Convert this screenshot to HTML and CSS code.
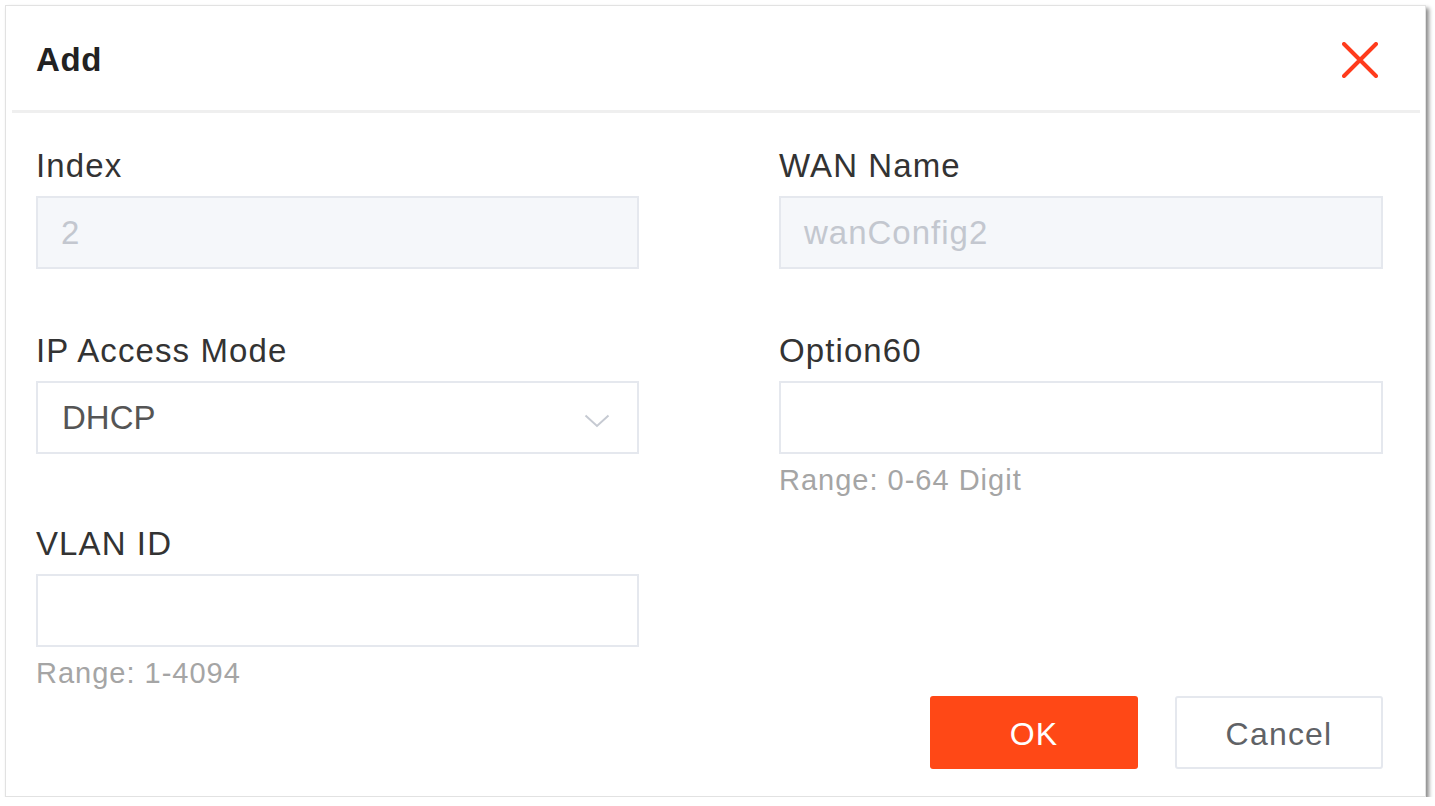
FILE: index.html
```html
<!DOCTYPE html>
<html lang="en">
<head>
<meta charset="utf-8">
<title>Add</title>
<link rel="stylesheet" href="styles.css">
</head>
<body>
<div class="dialog">
  <div class="dialog-header">
    <h1 class="dialog-title">Add</h1>
    <button class="close-btn" type="button" aria-label="Close">
      <svg width="36" height="36" viewBox="0 0 36 36"><path d="M2 2 L34 34 M34 2 L2 34" stroke="#ff3b1c" stroke-width="4" stroke-linecap="round" fill="none"/></svg>
    </button>
  </div>
  <div class="form-grid">
    <div class="field">
      <div class="field-label">Index</div>
      <div class="input is-disabled">2</div>
    </div>
    <div class="field">
      <div class="field-label">WAN Name</div>
      <div class="input is-disabled">wanConfig2</div>
    </div>
    <div class="field">
      <div class="field-label">IP Access Mode</div>
      <div class="input select">
        <span class="select-value">DHCP</span>
        <svg class="chevron" width="26" height="14" viewBox="0 0 26 14"><path d="M1.5 1.5 L13 12 L24.5 1.5" stroke="#c6cad2" stroke-width="2" fill="none"/></svg>
      </div>
    </div>
    <div class="field field-hinted">
      <div class="field-label">Option60</div>
      <div class="input"></div>
      <div class="hint">Range: 0-64 Digit</div>
    </div>
    <div class="field field-hinted">
      <div class="field-label">VLAN ID</div>
      <div class="input"></div>
      <div class="hint">Range: 1-4094</div>
    </div>
    <div class="actions">
      <button class="btn btn-primary" type="button">OK</button>
      <button class="btn btn-default" type="button">Cancel</button>
    </div>
  </div>
</div>
</body>
</html>
```

FILE: styles.css
```css
html, body {
  margin: 0;
  padding: 0;
  background: #ffffff;
}

body {
  font-family: "Liberation Sans", Arial, sans-serif;
  color: #333333;
}

.dialog {
  box-sizing: border-box;
  margin: 5px 0 0 5px;
  width: 1421px;
  height: 792px;
  background: #ffffff;
  border: 1px solid #e2e2e2;
  box-shadow: 3px 3px 4px rgba(0, 0, 0, 0.45);
  display: flex;
  flex-direction: column;
}

.dialog-header {
  margin: 0 5px 0 6px;
  border-bottom: 3px solid #efefef;
  display: flex;
  align-items: center;
  justify-content: space-between;
  padding: 3px 42px 0 24px;
  box-sizing: content-box;
  height: 101px;
}

.dialog-title {
  margin: 0;
  font-size: 33px;
  line-height: 40px;
  font-weight: bold;
  color: #222222;
  letter-spacing: 0.6px;
}

.close-btn {
  border: 0;
  padding: 0;
  margin: 0;
  background: transparent;
  width: 36px;
  height: 36px;
  display: block;
}

.close-btn svg {
  display: block;
}

.form-grid {
  display: grid;
  grid-template-columns: 603px 604px;
  column-gap: 140px;
  padding: 33px 42px 0 30px;
}

.field {
  display: flex;
  flex-direction: column;
  padding-bottom: 62px;
}

.field-hinted {
  padding-bottom: 28px;
}

.field-label {
  font-size: 33px;
  line-height: 40px;
  letter-spacing: 1.1px;
  color: #333333;
  margin-bottom: 10px;
}

.input {
  box-sizing: border-box;
  height: 73px;
  border: 2px solid #e5e8ee;
  background: #ffffff;
  padding: 0 24px 0 23px;
  font-size: 33px;
  line-height: 69px;
  letter-spacing: 1px;
  color: #555555;
}

.input.is-disabled {
  background: #f5f7fa;
  color: #c3c7cf;
}

.select {
  display: flex;
  align-items: center;
  justify-content: space-between;
  padding-right: 27px;
  padding-left: 24px;
}

.select-value {
  color: #555555;
  letter-spacing: 0;
}

.chevron {
  display: block;
  margin-top: 6px;
}

.hint {
  margin-top: 10px;
  font-size: 29px;
  line-height: 32px;
  letter-spacing: 1px;
  color: #a5a5a5;
}

.actions {
  display: flex;
  justify-content: flex-end;
  align-items: flex-start;
  gap: 37px;
  padding-top: 172px;
}

.btn {
  box-sizing: border-box;
  width: 208px;
  height: 73px;
  border-radius: 3px;
  font-family: "Liberation Sans", Arial, sans-serif;
  font-size: 32px;
  letter-spacing: 1.2px;
  padding: 4px 0 0 0;
  margin: 0;
  cursor: pointer;
}

.btn-primary {
  background: #ff4816;
  border: 0;
  color: #ffffff;
}

.btn-default {
  background: #ffffff;
  border: 2px solid #e5e8ee;
  color: #606266;
}
```
